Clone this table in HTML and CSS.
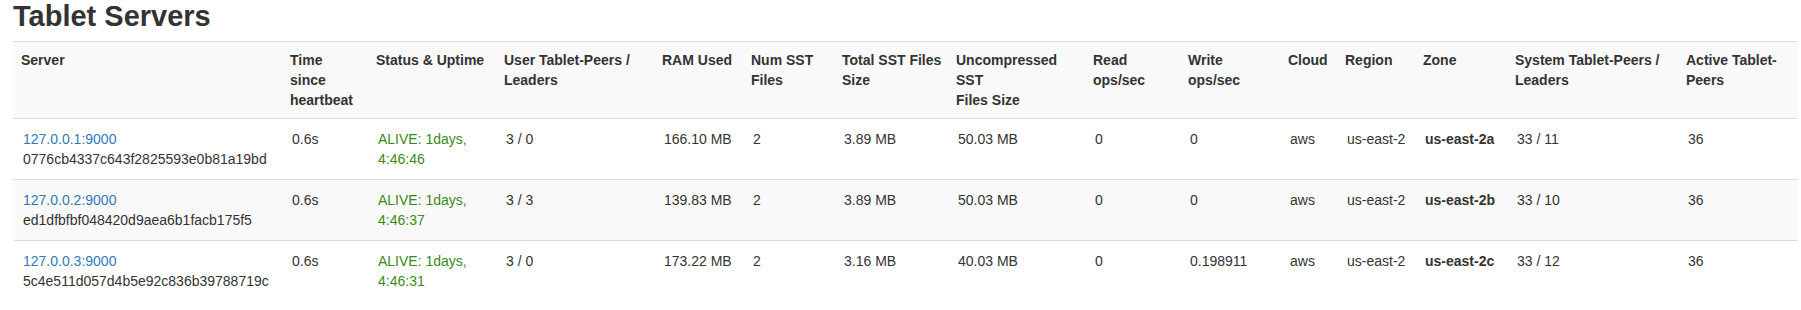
FILE: index.html
```html
<!DOCTYPE html>
<html>
<head>
  <title>Tablet Servers</title>
  <link rel="stylesheet" href="styles.css">
</head>
<body>

  <div class="main-container">

    <h2>Tablet Servers</h2>

    <table class="servers-table">
      <colgroup>
        <col class="c-server">
        <col class="c-time">
        <col class="c-status">
        <col class="c-user">
        <col class="c-ram">
        <col class="c-num">
        <col class="c-total">
        <col class="c-uncomp">
        <col class="c-read">
        <col class="c-write">
        <col class="c-cloud">
        <col class="c-region">
        <col class="c-zone">
        <col class="c-system">
        <col class="c-active">
      </colgroup>
      <tbody>
        <tr>
          <th>Server</th>
          <th>Time since heartbeat</th>
          <th>Status &amp; Uptime</th>
          <th>User Tablet-Peers / Leaders</th>
          <th>RAM Used</th>
          <th>Num SST Files</th>
          <th class="tight">Total SST Files Size</th>
          <th>Uncompressed SST<br>Files Size</th>
          <th>Read ops/sec</th>
          <th>Write ops/sec</th>
          <th>Cloud</th>
          <th>Region</th>
          <th>Zone</th>
          <th>System Tablet-Peers / Leaders</th>
          <th>Active Tablet-Peers</th>
        </tr>
        <tr>
          <td><a href="#">127.0.0.1:9000</a><br>0776cb4337c643f2825593e0b81a19bd</td>
          <td>0.6s</td>
          <td><span class="alive">ALIVE: 1days, 4:46:46</span></td>
          <td>3 / 0</td>
          <td>166.10 MB</td>
          <td>2</td>
          <td>3.89 MB</td>
          <td>50.03 MB</td>
          <td>0</td>
          <td>0</td>
          <td>aws</td>
          <td>us-east-2</td>
          <td><b>us-east-2a</b></td>
          <td>33 / 11</td>
          <td>36</td>
        </tr>
        <tr>
          <td><a href="#">127.0.0.2:9000</a><br>ed1dfbfbf048420d9aea6b1facb175f5</td>
          <td>0.6s</td>
          <td><span class="alive">ALIVE: 1days, 4:46:37</span></td>
          <td>3 / 3</td>
          <td>139.83 MB</td>
          <td>2</td>
          <td>3.89 MB</td>
          <td>50.03 MB</td>
          <td>0</td>
          <td>0</td>
          <td>aws</td>
          <td>us-east-2</td>
          <td><b>us-east-2b</b></td>
          <td>33 / 10</td>
          <td>36</td>
        </tr>
        <tr>
          <td><a href="#">127.0.0.3:9000</a><br>5c4e511d057d4b5e92c836b39788719c</td>
          <td>0.6s</td>
          <td><span class="alive">ALIVE: 1days, 4:46:31</span></td>
          <td>3 / 0</td>
          <td>173.22 MB</td>
          <td>2</td>
          <td>3.16 MB</td>
          <td>40.03 MB</td>
          <td>0</td>
          <td>0.198911</td>
          <td>aws</td>
          <td>us-east-2</td>
          <td><b>us-east-2c</b></td>
          <td>33 / 12</td>
          <td>36</td>
        </tr>
      </tbody>
    </table>

  </div>

</body>
</html>
```

FILE: styles.css
```css
 body{

     margin: 0;
     font-family: "Liberation Sans", Arial, sans-serif;
     font-size: 14px;
     line-height: 20px;
     color: #333;
     background: #fff;
 }

 .main-container{

     padding: 0 3px 0 13px;
 }

 h2{

     margin: 0 0 8px 0;
     font-size: 29px;
     line-height: 33px;
     font-weight: bold;
 }

 .servers-table{

     width: 100%;
     table-layout: fixed;
     border-collapse: collapse;
     border-spacing: 0;
 }

 .servers-table th,
 .servers-table td{

     text-align: left;
     vertical-align: top;
     border-top: 1px solid #ddd;
 }

 .servers-table th{

     padding: 8px;
     font-weight: bold;
 }

 .servers-table th.tight{

     padding-right: 4px;
 }

 .servers-table td{

     padding: 10px 8px 10px 10px;
 }

 .servers-table tr:nth-child(odd){

     background-color: #f9f9f9;
 }

 a{

     color: #337ab7;
     text-decoration: none;
 }

 .alive{

     color: #3b8a17;
 }

 .c-server{ width: 269px; }
 .c-time{ width: 86px; }
 .c-status{ width: 128px; }
 .c-user{ width: 158px; }
 .c-ram{ width: 89px; }
 .c-num{ width: 91px; }
 .c-total{ width: 114px; }
 .c-uncomp{ width: 137px; }
 .c-read{ width: 95px; }
 .c-write{ width: 100px; }
 .c-cloud{ width: 57px; }
 .c-region{ width: 78px; }
 .c-zone{ width: 92px; }
 .c-system{ width: 171px; }
 .c-active{ width: 120px; }
```
